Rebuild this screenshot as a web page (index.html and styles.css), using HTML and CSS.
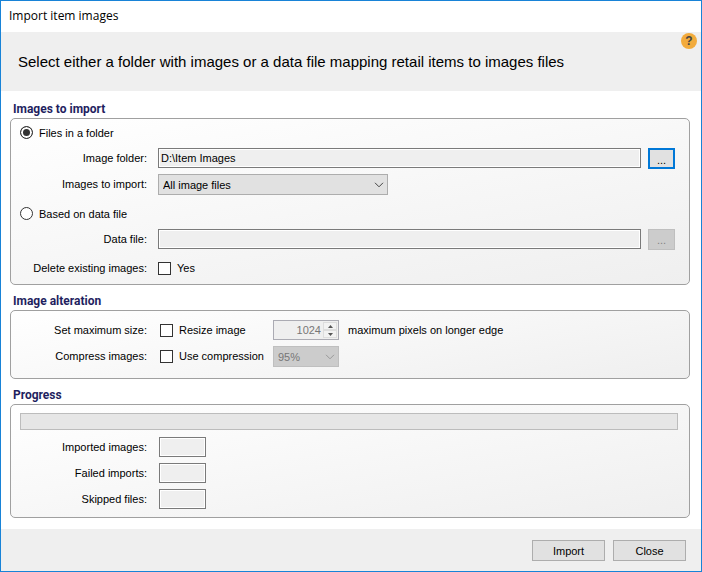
FILE: index.html
```html
<!DOCTYPE html>
<html lang="en">
<head>
<meta charset="utf-8">
<meta name="viewport" content="width=device-width, initial-scale=1">
<title>Import item images</title>
<link rel="stylesheet" href="styles.css">
</head>
<body>
<form class="dialog">
  <h1 class="title">Import item images</h1>
  <header class="banner">
    <p class="banner-text">Select either a folder with images or a data file mapping retail items to images files</p>
    <button class="help" type="button" aria-label="Help">?</button>
  </header>

  <main class="content">
    <section class="group">
      <h2 class="group-title">Images to import</h2>
      <div class="panel panel-import">
        <div class="rows">
          <label class="row option"><input class="radio" type="radio" name="source" checked>Files in a folder</label>
          <div class="row">
            <label class="label" for="folder">Image folder:</label>
            <input class="text" id="folder" type="text" value="D:\Item Images" readonly>
            <button class="button browse focused" type="button">...</button>
          </div>
          <div class="row">
            <label class="label" for="filter">Images to import:</label>
            <span class="drop drop-wide">
              <select class="select" id="filter"><option>All image files</option></select>
              <svg class="chevron" viewBox="0 0 10 6" aria-hidden="true"><path d="M1 .8 5 4.8 9 .8"/></svg>
            </span>
          </div>
        </div>
        <div class="rows">
          <label class="row option"><input class="radio" type="radio" name="source">Based on data file</label>
          <div class="row">
            <label class="label" for="datafile">Data file:</label>
            <input class="text" id="datafile" type="text" readonly>
            <button class="button browse" type="button" disabled>...</button>
          </div>
        </div>
        <div class="row">
          <span class="label">Delete existing images:</span>
          <label class="check-label"><input class="check" type="checkbox">Yes</label>
        </div>
      </div>
    </section>

    <section class="group">
      <h2 class="group-title">Image alteration</h2>
      <div class="panel panel-alter rows">
        <div class="row">
          <span class="label">Set maximum size:</span>
          <label class="check-label check-wide"><input class="check" type="checkbox">Resize image</label>
          <span class="spin">
            <input class="spin-input" id="edge" type="text" inputmode="numeric" value="1024" disabled>
            <span class="spin-buttons">
              <button class="spin-button" type="button" aria-label="Increase" disabled><svg class="arrow" viewBox="0 0 5 3" aria-hidden="true"><path d="M0 3 2.5 0 5 3z"/></svg></button>
              <button class="spin-button" type="button" aria-label="Decrease" disabled><svg class="arrow" viewBox="0 0 5 3" aria-hidden="true"><path d="M0 0 2.5 3 5 0z"/></svg></button>
            </span>
          </span>
          <label class="suffix" for="edge">maximum pixels on longer edge</label>
        </div>
        <div class="row">
          <span class="label">Compress images:</span>
          <label class="check-label check-wide"><input class="check" type="checkbox">Use compression</label>
          <span class="drop drop-small">
            <select class="select" aria-label="Compression" disabled><option>95%</option></select>
            <svg class="chevron" viewBox="0 0 10 6" aria-hidden="true"><path d="M1 .8 5 4.8 9 .8"/></svg>
          </span>
        </div>
      </div>
    </section>

    <section class="group">
      <h2 class="group-title">Progress</h2>
      <div class="panel panel-progress">
        <div class="bar" role="progressbar" aria-valuenow="0" aria-label="Progress"></div>
        <div class="rows">
          <div class="row">
            <label class="label" for="imported">Imported images:</label>
            <input class="text count" id="imported" type="text" readonly>
          </div>
          <div class="row">
            <label class="label" for="failed">Failed imports:</label>
            <input class="text count" id="failed" type="text" readonly>
          </div>
          <div class="row">
            <label class="label" for="skipped">Skipped files:</label>
            <input class="text count" id="skipped" type="text" readonly>
          </div>
        </div>
      </div>
    </section>
  </main>

  <footer class="footer">
    <button class="button action" type="button">Import</button>
    <button class="button action" type="button">Close</button>
  </footer>
</form>
</body>
</html>
```
FILE: styles.css
```css
* { box-sizing: border-box; }

body {
  margin: 0;
  background: #fff;
  color: #000;
  font: 11px/16px "Liberation Sans", Arial, sans-serif;
}

input, select, button {
  margin: 0;
  font: inherit;
  color: inherit;
  border-radius: 0;
}

.dialog {
  display: flex;
  flex-direction: column;
  min-height: 100vh;
  border: 1px solid #1883d7;
}

.title {
  margin: 0;
  padding: 7px 8px 8px;
  font: 12px/16px "Open Sans", "Noto Sans", sans-serif;
}

.banner {
  position: relative;
  padding: 20px 17px 19px;
  background: #efefef;
}

.banner-text {
  margin: 0;
  font-size: 15px;
  line-height: 20px;
}

.help {
  position: absolute;
  top: 1px;
  right: 4px;
  width: 16px;
  height: 16px;
  padding: 0;
  border: 0;
  border-radius: 50%;
  background: #f2ab3c;
  color: #444;
  font-size: 12px;
  font-weight: bold;
  line-height: 16px;
}

.content {
  display: flex;
  flex: 1;
  flex-direction: column;
  gap: 8px;
  padding: 10px 11px 11px 9px;
}

.group-title {
  margin: 0 0 1px;
  padding-left: 3px;
  color: #1f1f5f;
  font: bold 12px/16px Roboto, "Liberation Sans", sans-serif;
}

.panel {
  border: 1px solid #a0a0a0;
  border-radius: 5px;
  background: linear-gradient(170deg, #fff, #efefef);
}

.panel-import {
  display: flex;
  flex-direction: column;
  gap: 8px;
  padding: 3px 14px 5px 0;
}

.panel-alter { padding: 9px 14px 11px 0; }

.panel-progress { padding: 8px 11px 7px 0; }

.rows {
  display: flex;
  flex-direction: column;
  gap: 5px;
}

.row {
  display: flex;
  align-items: flex-start;
  height: 21px;
  line-height: 20px;
}

.label {
  flex: none;
  width: 136px;
  margin-right: 11px;
  text-align: right;
}

.panel-alter .label { margin-right: 13px; }
.panel-progress .label { margin-right: 12px; }

.option {
  align-items: center;
  align-self: flex-start;
  gap: 6px;
  padding-left: 9px;
}

.radio {
  appearance: none;
  width: 13px;
  height: 13px;
  border: 1px solid #333;
  border-radius: 50%;
  background: #fff;
}

.radio:checked {
  background: #333;
  box-shadow: inset 0 0 0 2px #fff;
}

.check-label {
  display: flex;
  align-items: center;
  gap: 6px;
  height: 20px;
}

.check-wide { width: 113px; }

.check {
  appearance: none;
  width: 13px;
  height: 13px;
  border: 1px solid #333;
  background: #fff;
}

.text {
  flex: 1;
  min-width: 0;
  height: 20px;
  padding: 0 2px;
  border: 1px solid #7a7a7a;
  background: #efefef;
  box-shadow: inset 0 0 0 1px #fff;
  line-height: 18px;
}

.count {
  flex: none;
  width: 47px;
}

.button {
  height: 21px;
  padding: 0;
  border: 1px solid #adadad;
  background: #e1e1e1;
  text-align: center;
}

.browse {
  width: 27px;
  margin-left: 7px;
}

.browse:disabled {
  border-color: #bfbfbf;
  background: #ccc;
  color: #838383;
}

.focused { border: 2px solid #0078d7; }

.drop { position: relative; }
.drop-wide { width: 230px; }
.drop-small { width: 66px; }

.select {
  display: block;
  appearance: none;
  width: 100%;
  height: 21px;
  padding: 0 4px;
  border: 1px solid #adadad;
  background: #e1e1e1;
}

.select:disabled {
  border-color: #bfbfbf;
  background: #ccc;
  color: #777;
  opacity: 1;
}

.chevron {
  position: absolute;
  top: 8px;
  right: 4px;
  width: 10px;
  height: 6px;
  fill: none;
  stroke: #444;
  pointer-events: none;
}

.select:disabled + .chevron { stroke: #999; }

.spin {
  display: flex;
  width: 66px;
  height: 20px;
  padding: 1px;
  border: 1px solid #ababb3;
  background: #efefef;
}

.spin-input {
  flex: 1;
  min-width: 0;
  padding: 0 2px;
  border: 0;
  background: none;
  color: #777;
  text-align: right;
}

.spin-buttons {
  display: flex;
  flex-direction: column;
  width: 14px;
}

.spin-button {
  display: flex;
  flex: 1;
  align-items: center;
  justify-content: center;
  padding: 0;
  border: 1px solid #ddd;
  background: #f2f2f2;
}

.arrow {
  width: 5px;
  height: 3px;
  fill: #555;
}

.suffix { margin-left: 9px; }

.bar {
  height: 17px;
  margin: 0 0 7px 9px;
  border: 1px solid #bcbcbc;
  background: #e6e6e6;
}

.footer {
  display: flex;
  justify-content: flex-end;
  gap: 8px;
  padding: 11px 15px 10px;
  background: #efefef;
}

.action { width: 73px; }
```
